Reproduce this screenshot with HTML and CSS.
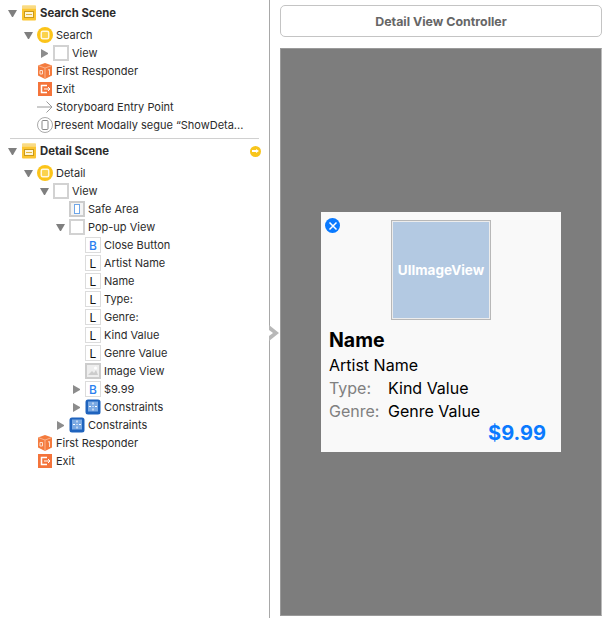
FILE: index.html
```html
<!DOCTYPE html>
<html lang="en">
<head>
    <meta charset="UTF-8">
    <meta name="viewport" content="width=device-width, initial-scale=1.0">
    <title>Detail View Controller</title>
    <link rel="stylesheet" href="styles.css">
</head>
<body>
    <svg class="defs" width="0" height="0">
        <symbol id="i-scene" viewBox="0 0 16 16">
            <rect x="1" y="0.500" width="14" height="15" rx="1" fill="#fcc531"/>
            <rect x="1" y="0.500" width="14" height="3" fill="#fde9a8"/>
            <path d="M1.500 2h13" stroke="#e8ad20" stroke-width="1" stroke-dasharray="1 1"/>
            <rect x="3.500" y="6.500" width="9" height="6" fill="#fff6d8" stroke="#c99a1c"/>
            <path d="M5 9.500h6" stroke="#e3b63a"/>
        </symbol>
        <symbol id="i-vc" viewBox="0 0 16 16">
            <circle cx="8" cy="8" r="8" fill="#fcc419"/>
            <rect x="4.250" y="4.250" width="7.500" height="7.500" rx="1.500" fill="#fbd34d" stroke="#fff8e0" stroke-width="1.500"/>
        </symbol>
        <symbol id="i-cube" viewBox="0 0 16 16">
            <path d="M8 0l7 2.500v10L8 16 1 12.500v-10z" fill="#f47b3e"/>
            <path d="M1 2.500L8 5l7-2.500" fill="none" stroke="#fbb48c"/>
            <path d="M8 5v11" stroke="#fbb48c"/>
            <path d="M3 7.500h2.500v3.500H3zM11 7l1.500-.5v5.500" fill="none" stroke="#fde0cf"/>
        </symbol>
        <symbol id="i-exit" viewBox="0 0 16 16">
            <rect x="1" y="1" width="14" height="14" fill="#f4743b"/>
            <path d="M10 4.500H4.500v7H10" fill="none" stroke="#fff" stroke-width="1.500"/>
            <path d="M7 8h6M11 6l2 2-2 2" fill="none" stroke="#fff"/>
        </symbol>
        <symbol id="i-entry" viewBox="0 0 16 16">
            <path d="M0 8h15M9.500 2.500L15 8l-5.500 5.500" fill="none" stroke="#9a9a9a"/>
        </symbol>
        <symbol id="i-segue" viewBox="0 0 16 16">
            <circle cx="8" cy="8" r="7.500" fill="#fff" stroke="#aaa"/>
            <rect x="5" y="3.500" width="6" height="9" rx="1" fill="#fff" stroke="#888"/>
        </symbol>
        <symbol id="i-safe" viewBox="0 0 16 16">
            <rect width="16" height="16" fill="#ccc"/>
            <rect x="2" y="2" width="12" height="12" fill="#f4f4f4"/>
            <rect x="5.500" y="3.500" width="5" height="9" fill="#fff" stroke="#6ea6e8"/>
        </symbol>
        <symbol id="i-image" viewBox="0 0 16 16">
            <rect width="16" height="16" fill="#ccc"/>
            <rect x="2" y="2" width="12" height="12" fill="#eee"/>
            <path d="M3 12l4-4 2 2 2-3 2 5z" fill="#ccc"/>
            <circle cx="10.500" cy="5" r="1.500" fill="#fff"/>
        </symbol>
        <symbol id="i-cons" viewBox="0 0 16 16">
            <rect x="0.500" y="0.500" width="15" height="15" rx="2.500" fill="#1f63bd"/>
            <rect x="3" y="2.500" width="10" height="10" fill="#7aa9e3"/>
            <path d="M8 3.500v2M8 9.500v2M4 7.500h2M10 7.500h2" stroke="#fff"/>
            <rect x="7.500" y="7" width="1" height="1" fill="#fff"/>
        </symbol>
    </svg>

    <div class="app">
        <aside class="outline">
            <div class="row scene lv0"><span class="arrow open"></span><svg class="icon"><use href="#i-scene"/></svg><span class="label">Search Scene</span></div>
            <div class="row first lv1"><span class="arrow open"></span><svg class="icon"><use href="#i-vc"/></svg><span class="label">Search</span></div>
            <div class="row lv2"><span class="arrow closed"></span><span class="icon view"></span><span class="label">View</span></div>
            <div class="row lv1"><span class="arrow"></span><svg class="icon"><use href="#i-cube"/></svg><span class="label">First Responder</span></div>
            <div class="row lv1"><span class="arrow"></span><svg class="icon"><use href="#i-exit"/></svg><span class="label">Exit</span></div>
            <div class="row lv1"><span class="arrow"></span><svg class="icon"><use href="#i-entry"/></svg><span class="label">Storyboard Entry Point</span></div>
            <div class="row lv1 segue"><span class="arrow"></span><svg class="icon"><use href="#i-segue"/></svg><span class="label">Present Modally segue “ShowDeta...</span></div>

            <hr class="divider">

            <div class="row scene lv0"><span class="arrow open"></span><svg class="icon"><use href="#i-scene"/></svg><span class="label">Detail Scene</span><span class="warn"></span></div>
            <div class="row first lv1"><span class="arrow open"></span><svg class="icon"><use href="#i-vc"/></svg><span class="label">Detail</span></div>
            <div class="row lv2"><span class="arrow open"></span><span class="icon view"></span><span class="label">View</span></div>
            <div class="row lv3"><span class="arrow"></span><svg class="icon"><use href="#i-safe"/></svg><span class="label">Safe Area</span></div>
            <div class="row lv3"><span class="arrow open"></span><span class="icon view"></span><span class="label">Pop-up View</span></div>
            <div class="row lv4"><span class="arrow"></span><span class="icon glyph blue">B</span><span class="label">Close Button</span></div>
            <div class="row lv4"><span class="arrow"></span><span class="icon glyph">L</span><span class="label">Artist Name</span></div>
            <div class="row lv4"><span class="arrow"></span><span class="icon glyph">L</span><span class="label">Name</span></div>
            <div class="row lv4"><span class="arrow"></span><span class="icon glyph">L</span><span class="label">Type:</span></div>
            <div class="row lv4"><span class="arrow"></span><span class="icon glyph">L</span><span class="label">Genre:</span></div>
            <div class="row lv4"><span class="arrow"></span><span class="icon glyph">L</span><span class="label">Kind Value</span></div>
            <div class="row lv4"><span class="arrow"></span><span class="icon glyph">L</span><span class="label">Genre Value</span></div>
            <div class="row lv4"><span class="arrow"></span><svg class="icon"><use href="#i-image"/></svg><span class="label">Image View</span></div>
            <div class="row lv4"><span class="arrow closed"></span><span class="icon glyph blue">B</span><span class="label">$9.99</span></div>
            <div class="row lv4"><span class="arrow closed"></span><svg class="icon"><use href="#i-cons"/></svg><span class="label">Constraints</span></div>
            <div class="row lv3"><span class="arrow closed"></span><svg class="icon"><use href="#i-cons"/></svg><span class="label">Constraints</span></div>
            <div class="row lv1"><span class="arrow"></span><svg class="icon"><use href="#i-cube"/></svg><span class="label">First Responder</span></div>
            <div class="row lv1"><span class="arrow"></span><svg class="icon"><use href="#i-exit"/></svg><span class="label">Exit</span></div>
        </aside>

        <main class="stage">
            <div class="entry-arrow"></div>
            <div class="title-bar">Detail View Controller</div>
            <div class="device">
                <div class="popup">
                    <span class="close-btn">
                        <svg width="10" height="10" viewBox="0 0 10 10"><path d="M1.500 1.500l7 7M8.500 1.500l-7 7" stroke="#fff" stroke-width="1.500"/></svg>
                    </span>
                    <div class="image-view"><span>UIImageView</span></div>
                    <div class="name">Name</div>
                    <div class="artist">Artist Name</div>
                    <div class="info"><span class="key">Type:</span><span>Kind Value</span></div>
                    <div class="info"><span class="key">Genre:</span><span>Genre Value</span></div>
                    <div class="price">$9.99</div>
                </div>
            </div>
        </main>
    </div>
</body>
</html>
```

FILE: styles.css
```css
body {
    margin: 0;
    font-family: "Inter", "Liberation Sans", sans-serif;
    background-color: #fff;
    overflow: hidden;
}

.defs {
    display: block;
    height: 0;
}

.app {
    display: flex;
    height: 618px;
}

.outline {
    box-sizing: border-box;
    width: 270px;
    padding-top: 4px;
    border-right: 1px solid #a8a8a8;
}

.row {
    display: flex;
    align-items: center;
    height: 18px;
    font-size: 11px;
    color: #2b2b2b;
    white-space: nowrap;
}

.first {
    margin-top: 4px;
}

.lv0 { padding-left: 8px; }
.lv1 { padding-left: 24px; }
.lv2 { padding-left: 40px; }
.lv3 { padding-left: 56px; }
.lv4 { padding-left: 72px; }

.arrow {
    flex: none;
    box-sizing: border-box;
    width: 9px;
    height: 8px;
    margin-right: 4px;
}

.arrow.open {
    height: 7px;
    border-style: solid;
    border-width: 7px 4.500px 0;
    border-color: #7f7f7f transparent transparent;
}

.arrow.closed {
    width: 7px;
    height: 9px;
    margin-left: 1px;
    margin-right: 5px;
    border-style: solid;
    border-width: 4.500px 0 4.500px 7px;
    border-color: transparent transparent transparent #8c8c8c;
}

.icon {
    flex: none;
    box-sizing: border-box;
    width: 16px;
    height: 16px;
    margin-right: 3px;
}

.view {
    background-color: #fff;
    border: 2px solid #d2d2d2;
}

.glyph {
    display: flex;
    align-items: center;
    justify-content: center;
    border: 1px solid #dcdcdc;
    font-size: 12px;
    font-weight: 400;
    color: #111;
}

.glyph.blue {
    color: #2a80f0;
    font-weight: 500;
}

.scene {
    font-size: 11.300px;
    font-weight: 700;
}

.segue .icon {
    margin-right: 1px;
}

.divider {
    height: 1px;
    margin: 4px 10px 3px;
    border: 0;
    background-color: #d0d0d0;
}

.warn {
    position: relative;
    width: 11px;
    height: 11px;
    margin-left: auto;
    margin-right: 8px;
    border-radius: 50%;
    background-color: #f8c51c;
}

.warn::after {
    content: "";
    position: absolute;
    left: 5.500px;
    top: 3px;
    border-style: solid;
    border-width: 2.500px 0 2.500px 3px;
    border-color: transparent transparent transparent #fff;
}

.warn::before {
    content: "";
    position: absolute;
    left: 2px;
    top: 4.500px;
    width: 4px;
    height: 2px;
    background-color: #fff;
}

.stage {
    position: relative;
    flex: 1;
    display: flex;
    flex-direction: column;
    padding: 5px 1px 2px 10px;
}

.entry-arrow {
    position: absolute;
    left: -1px;
    top: 325px;
    width: 0;
    height: 0;
    border-style: solid;
    border-width: 8px 0 8px 10px;
    border-color: transparent transparent transparent #b8b8b8;
}

/* white notch inside the scene arrow */
.entry-arrow::after {
    content: "";
    position: absolute;
    left: -10px;
    top: -3px;
    border-style: solid;
    border-width: 3px 0 3px 4px;
    border-color: transparent transparent transparent #fff;
}

.title-bar {
    box-sizing: border-box;
    height: 32px;
    line-height: 31px;
    text-align: center;
    font-size: 12.400px;
    font-weight: 700;
    color: #666;
    border: 1px solid #c4c4c4;
    border-radius: 5px;
}

.device {
    flex: 1;
    display: flex;
    align-items: center;
    justify-content: center;
    margin-top: 11px;
    background-color: #7d7d7d;
    border: 1px solid #9a9a9a;
    border-right-color: #bbb;
}

.popup {
    position: relative;
    box-sizing: border-box;
    width: 240px;
    height: 240px;
    padding: 8px 15px 0 8px;
    background-color: #f9f9f9;
    color: #000;
}

.close-btn {
    position: absolute;
    left: 4px;
    top: 6px;
    display: flex;
    align-items: center;
    justify-content: center;
    width: 15px;
    height: 15px;
    border-radius: 50%;
    background-color: #0a7aff;
}

.image-view {
    box-sizing: border-box;
    display: flex;
    align-items: center;
    justify-content: center;
    width: 100px;
    height: 100px;
    margin: 0 0 0 62px;
    background-color: #b3c9e2;
    border: 1px solid #b8b8b8;
    box-shadow: inset 0 0 0 1px #ececec;
    color: #fff;
    font-size: 13.500px;
    font-weight: 700;
}

.name {
    margin-top: 8px;
    height: 24px;
    line-height: 24px;
    font-size: 19.500px;
    font-weight: 700;
}

.artist {
    height: 25px;
    line-height: 27px;
    font-size: 16px;
}

.info {
    display: flex;
    height: 23px;
    line-height: 23px;
    font-size: 16px;
}

.key {
    width: 59px;
    color: #808080;
}

.price {
    height: 20px;
    line-height: 20px;
    text-align: right;
    font-size: 20px;
    font-weight: 700;
    color: #0a7aff;
}
```
